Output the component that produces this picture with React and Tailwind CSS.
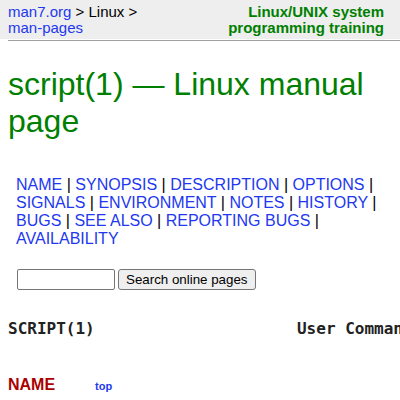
import React from 'react'

const sections = [
  'NAME', 'SYNOPSIS', 'DESCRIPTION', 'OPTIONS', 'SIGNALS', 'ENVIRONMENT',
  'NOTES', 'HISTORY', 'BUGS', 'SEE ALSO', 'REPORTING BUGS', 'AVAILABILITY',
]

export default function App() {
  return (
    <div className="w-[400px] h-[400px] overflow-hidden bg-white text-black font-['Liberation_Sans',Arial,sans-serif]">
      {/* Top bar */}
      <div className="bg-[#eeeeee] h-[39px] flex justify-between pl-2 pr-4 pt-1 text-[15px] leading-4">
        <div>
          <a className="text-[#2238f0]">man7.org</a> &gt; Linux &gt;<br />
          <a className="text-[#2238f0]">man-pages</a>
        </div>
        <div className="text-right font-bold text-[#008000]">
          Linux/UNIX system<br />programming training
        </div>
      </div>
      <div className="mt-px ml-2 h-px bg-[#a0a0a0]" />

      {/* Title */}
      <h1 className="mt-[25px] ml-2 text-[32px] leading-[37px] text-[#008000]">
        script(1) — Linux manual page
      </h1>

      {/* Section links */}
      <div className="mt-9 pl-4 pr-4 text-[16px] leading-[18px]">
        {sections.map((s, i) => (
          <React.Fragment key={s}>
            <a className="text-[#2238f0]">{s}</a>
            {i < sections.length - 1 ? ' | ' : ''}
          </React.Fragment>
        ))}
      </div>

      {/* Search */}
      <form className="mt-[21px] ml-[17px] flex gap-[3px]" onSubmit={e => e.preventDefault()}>
        <input type="text" className="w-[98px] h-[21px] border border-[#767676] rounded-[2px] bg-white px-1 text-[13.33px]" />
        <button type="submit" className="h-[21px] px-[7px] border border-[#767676] rounded-[3px] bg-[#efefef] text-[13.33px] leading-none">
          Search online pages
        </button>
      </form>

      {/* Headline */}
      <pre className="mt-[30px] ml-2 font-['DejaVu_Sans_Mono',monospace] font-bold text-[16px] leading-[18.6px] text-[#222] whitespace-pre">
        {'SCRIPT(1)                     User Commands                    SCRIPT(1)'}
      </pre>

      {/* NAME */}
      <h2 className="mt-[37px] ml-2 flex items-baseline text-[16px] leading-[18.4px] font-bold">
        <span className="text-[#aa0000] w-[87px]">NAME</span>
        <a className="text-[11px] text-[#2238f0]">top</a>
      </h2>
    </div>
  )
}
